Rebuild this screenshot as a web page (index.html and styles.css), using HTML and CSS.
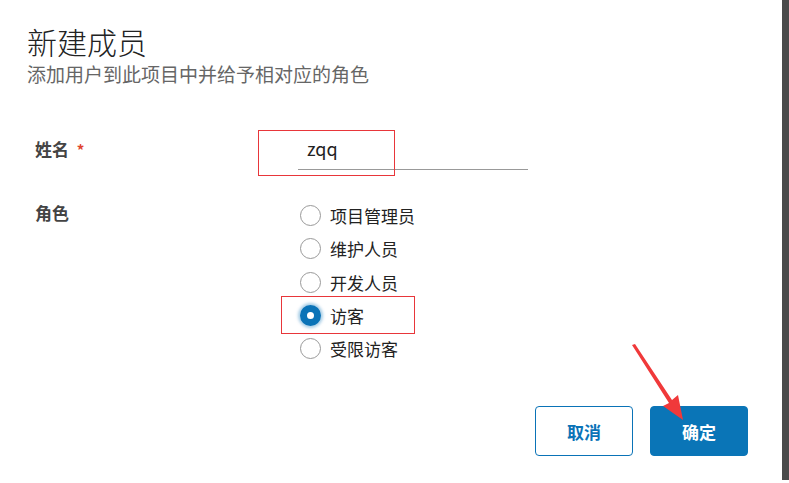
FILE: index.html
```html
<!DOCTYPE html>
<html lang="zh-CN">
<head>
    <meta charset="UTF-8">
    <meta name="viewport" content="width=device-width, initial-scale=1.0">
    <title>新建成员</title>
    <link rel="stylesheet" href="styles.css">
</head>
<body>
    <div class="page">
        <div class="dialog">
            <header class="dialog-header">
                <h1>新建成员</h1>
                <p>添加用户到此项目中并给予相对应的角色</p>
            </header>

            <form class="member-form">
                <div class="form-row name-row">
                    <label class="form-label" for="member-name">姓名 <span class="required">*</span></label>
                    <div class="form-control">
                        <input type="text" id="member-name" class="text-input" value="zqq">
                    </div>
                </div>

                <div class="form-row role-row">
                    <span class="form-label">角色</span>
                    <div class="form-control radio-list">
                        <label class="radio"><input type="radio" name="role"><span class="radio-mark"></span>项目管理员</label>
                        <label class="radio"><input type="radio" name="role"><span class="radio-mark"></span>维护人员</label>
                        <label class="radio"><input type="radio" name="role"><span class="radio-mark"></span>开发人员</label>
                        <label class="radio"><input type="radio" name="role" checked><span class="radio-mark"></span>访客</label>
                        <label class="radio"><input type="radio" name="role"><span class="radio-mark"></span>受限访客</label>
                    </div>
                </div>

                <div class="form-actions">
                    <button type="button" class="btn btn-outline">取消</button>
                    <button type="submit" class="btn btn-primary">确定</button>
                </div>
            </form>

            <!-- annotations drawn over the screenshot -->
            <div class="mark mark-name"></div>
            <div class="mark mark-role"></div>
            <svg class="arrow" width="60" height="80" viewBox="0 0 60 80">
                <polygon points="5,3 8,2 45,58 51,53 56,78 36,64 42,61" fill="#f0393a"/>
            </svg>
        </div>
        <div class="scrollbar"></div>
    </div>
</body>
</html>
```

FILE: styles.css
```css
body {
    margin: 0;
    padding: 0;
    background: #fff;
    font-family: "Noto Sans CJK SC", "Noto Sans", sans-serif;
    color: #222;
}

.page {
    display: flex;
    width: 789px;
    height: 483px;
    overflow: hidden;
}

.dialog {
    position: relative;
    flex: 1;
    padding: 0 34px 0 27px;
}

.scrollbar {
    width: 7px;
    height: 480px;
    background: #4a4a4a;
}

.dialog-header h1 {
    margin: 22px 0 0;
    font-size: 30px;
    line-height: 38px;
    font-weight: 300;
    color: #222;
}

.dialog-header p {
    margin: 0;
    font-size: 19px;
    line-height: 28px;
    color: #666;
}

.member-form {
    margin-top: 46px;
    padding-left: 8px;
}

.form-row {
    display: flex;
}

.form-label {
    width: 263px;
    font-size: 17px;
    font-weight: bold;
    color: #444;
    line-height: 24px;
}

.required {
    color: #e0452f;
    font-size: 15px;
    margin-left: 4px;
}

.form-control {
    flex: 1;
}

.name-row .form-label {
    padding-top: 3px;
}

.text-input {
    width: 230px;
    box-sizing: border-box;
    border: none;
    border-bottom: 1px solid #999;
    outline: none;
    padding: 2px 9px 8px;
    font-family: inherit;
    font-size: 18px;
    line-height: 25px;
    color: #222;
    background: transparent;
}

.role-row {
    margin-top: 27px;
}

.role-row .form-label {
    padding-top: 4px;
}

.radio-list {
    display: flex;
    flex-direction: column;
    padding: 2px 0 0 2px;
}

.radio {
    display: flex;
    align-items: center;
    height: 33.25px;
    font-size: 17px;
    color: #222;
}

.radio input {
    display: none;
}

.radio-mark {
    width: 21px;
    height: 21px;
    box-sizing: border-box;
    border: 1px solid #999;
    border-radius: 50%;
    margin-right: 9px;
    background: #fff;
}

.radio input:checked + .radio-mark {
    border: 7px solid #0a73b7;
    background: #fff;
    box-shadow: 0 0 3px 2px rgba(10, 115, 183, 0.35);
}

.form-actions {
    display: flex;
    justify-content: flex-end;
    gap: 17px;
    margin-top: 41px;
}

.btn {
    width: 98px;
    height: 50px;
    box-sizing: border-box;
    border-radius: 4px;
    font-family: inherit;
    font-size: 17px;
    font-weight: bold;
    cursor: pointer;
}

.btn-outline {
    background: #fff;
    border: 1px solid #0a73b7;
    color: #0a73b7;
}

.btn-primary {
    background: #0a75b7;
    border: 1px solid #0a75b7;
    color: #fff;
}

.mark {
    position: absolute;
    border: 1px solid #e8363a;
}

.mark-name {
    left: 258px;
    top: 130px;
    width: 135px;
    height: 44px;
}

.mark-role {
    left: 281px;
    top: 296px;
    width: 132px;
    height: 36px;
}

.arrow {
    position: absolute;
    left: 627px;
    top: 342px;
}
```
